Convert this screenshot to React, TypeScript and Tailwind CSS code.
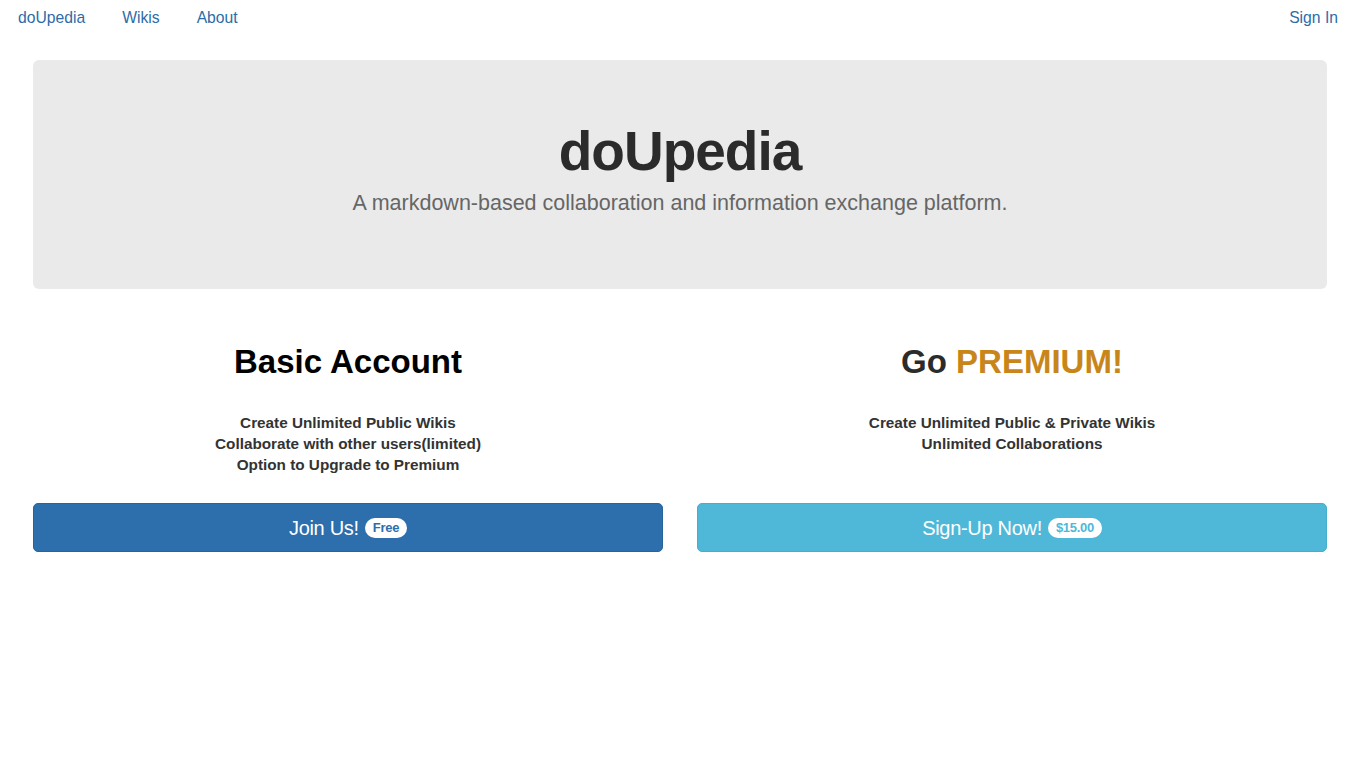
import React from 'react';

const font = { fontFamily: '"Liberation Sans", Arial, sans-serif' };

const NavBar = () => (
    <nav className="flex items-center justify-between h-[35px] px-[18px] text-[15.7px] text-[#2d6ca8]">
        <div className="flex items-center gap-[37px]">
            <a href="#">doUpedia</a>
            <a href="#">Wikis</a>
            <a href="#">About</a>
        </div>
        <a href="#" className="mr-[4px]">Sign In</a>
    </nav>
);

const Badge = ({ label, color }: { label: string; color: string }) => (
    <span className={`ml-[6px] inline-block rounded-full bg-white px-[8px] py-[2px] text-[13px] font-bold leading-[16px] tracking-[-0.3px] ${color}`}>
        {label}
    </span>
);

const App = () => {
    return (
        <div style={font} className="min-h-[763px] bg-white text-[#333]">
            <NavBar />

            <div className="mx-[33px] mt-[25px] flex h-[229px] flex-col items-center rounded-[6px] bg-[#eaeaea] pt-[58px]">
                <h1 className="text-[55px] font-bold leading-[66px] tracking-[-1px] text-[#2b2b2b]">doUpedia</h1>
                <p className="mt-[4px] text-[21.5px] leading-[30px] text-[#666]">
                    A markdown-based collaboration and information exchange platform.
                </p>
            </div>

            <div className="mx-[33px] mt-[53px] grid grid-cols-2 gap-[34px]">
                <div className="flex flex-col items-center">
                    <h2 className="text-[33px] font-bold leading-[40px] text-black">Basic Account</h2>
                    <ul className="mt-[30px] h-[86px] text-center text-[15.3px] font-bold leading-[21px] text-[#333]">
                        <li>Create Unlimited Public Wikis</li>
                        <li>Collaborate with other users(limited)</li>
                        <li>Option to Upgrade to Premium</li>
                    </ul>
                    <button className="mt-[5px] flex h-[49px] w-full items-center justify-center rounded-[5px] border border-[#28639c] bg-[#2d6ead] text-[20px] tracking-[-0.3px] text-white">
                        Join Us!
                        <Badge label="Free" color="text-[#2d6ead]" />
                    </button>
                </div>

                <div className="flex flex-col items-center">
                    <h2 className="text-[33px] font-bold leading-[40px] text-[#2b2b2b]">
                        Go <span className="text-[#c8861a]">PREMIUM!</span>
                    </h2>
                    <ul className="mt-[30px] h-[86px] text-center text-[15.3px] font-bold leading-[21px] text-[#333]">
                        <li>Create Unlimited Public &amp; Private Wikis</li>
                        <li>Unlimited Collaborations</li>
                    </ul>
                    <button className="mt-[5px] flex h-[49px] w-full items-center justify-center rounded-[5px] border border-[#45aecf] bg-[#4fb8d8] text-[20px] tracking-[-0.3px] text-white">
                        Sign-Up Now!
                        <Badge label="$15.00" color="text-[#4fb8d8]" />
                    </button>
                </div>
            </div>
        </div>
    );
};

export default App;
